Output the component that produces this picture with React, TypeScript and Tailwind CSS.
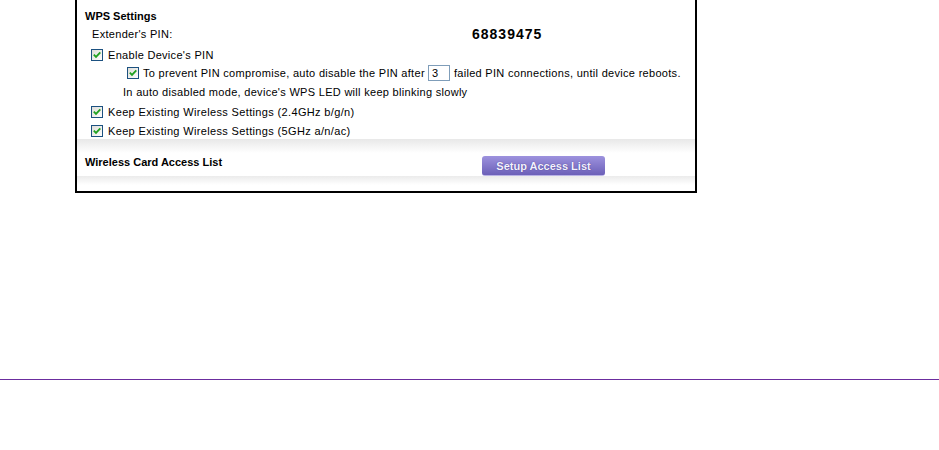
function Check() {
  return (
    <svg width="12" height="12" viewBox="0 0 12 12" className="shrink-0">
      <defs>
        <linearGradient id="cbg" x1="0" y1="0" x2="1" y2="1">
          <stop offset="0" stopColor="#dcdcd7" />
          <stop offset="1" stopColor="#ffffff" />
        </linearGradient>
      </defs>
      <rect x="0.5" y="0.5" width="11" height="11" fill="url(#cbg)" stroke="#1c5180" />
      <path d="M2.8 5.6 L5 7.9 L9.3 3.4" fill="none" stroke="#21a121" strokeWidth="1.8" />
    </svg>
  );
}

export default function App() {
  return (
    <div className="w-[939px] h-[450px] bg-white text-black font-['Liberation_Sans',Arial,sans-serif] text-[11px] leading-[14px]">
      <div className="ml-[75px] w-[622px] border-x-2 border-b-2 border-black pt-[7px]">
        {/* WPS Settings */}
        <div className="h-[18px] flex items-center pl-2 font-bold">WPS Settings</div>

        <div className="h-[18px] flex items-center pl-[15px]">
          <span className="w-[380px] tracking-[0.3px]">Extender's PIN:</span>
          <span className="text-[14px] font-bold tracking-[1px]">68839475</span>
        </div>

        <div className="mt-[3px] h-[18px] flex items-center pl-[14px] gap-[5px] tracking-[0.3px]">
          <Check />
          <span>Enable Device's PIN</span>
        </div>

        <div className="h-[18px] flex items-center pl-[50px] tracking-[0.3px]">
          <Check />
          <span className="ml-[4px]">To prevent PIN compromise, auto disable the PIN after</span>
          <input
            type="text"
            defaultValue="3"
            className="ml-[3px] w-[22px] h-[16px] border border-[#7f9db9] px-[3px] text-[11px] leading-[14px] outline-none"
          />
          <span className="ml-[4px]">failed PIN connections, until device reboots.</span>
        </div>

        <div className="mt-px h-[18px] flex items-center pl-[46px] tracking-[0.3px]">
          In auto disabled mode, device's WPS LED will keep blinking slowly
        </div>

        <div className="mt-[2px] h-[18px] flex items-center pl-[14px] gap-[5px] tracking-[0.35px]">
          <Check />
          <span>Keep Existing Wireless Settings (2.4GHz b/g/n)</span>
        </div>

        <div className="mt-px h-[17px] flex items-center pl-[14px] gap-[5px] tracking-[0.35px]">
          <Check />
          <span>Keep Existing Wireless Settings (5GHz a/n/ac)</span>
        </div>

        {/* Wireless Card Access List */}
        <div className="pt-[17px] bg-[linear-gradient(to_bottom,#e8e8e8,#ffffff_14px)]">
          <div className="flex items-start h-[20px] pl-2">
            <span className="w-[397px] font-bold leading-[13px]">Wireless Card Access List</span>
            <button className="w-[123px] h-[20px] rounded-[3px] border-b border-[#b9b2e6] bg-[linear-gradient(to_bottom,#9d92de,#6c60b8)] text-[#f4f2ff] font-bold text-[11px] [text-shadow:0_0_1px_#3b2f80]">
              Setup Access List
            </button>
          </div>
          <div className="h-[15px] bg-[linear-gradient(to_bottom,#ebebeb,#ffffff_9px)]" />
        </div>
      </div>

      <div className="mt-[186px] h-px bg-[#6b2d9e]" />
    </div>
  );
}
